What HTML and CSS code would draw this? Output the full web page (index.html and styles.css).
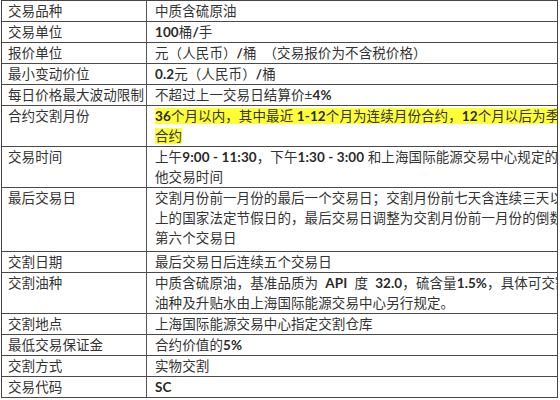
FILE: index.html
```html
<!DOCTYPE html>
<html lang="zh-CN">
<head>
<meta charset="utf-8">
<title>原油期货合约</title>
<link rel="stylesheet" href="styles.css">
</head>
<body>
<div class="sheet">
  <div class="row"><div class="k">交易品种</div><div class="v">中质含硫原油</div></div>
  <div class="row"><div class="k">交易单位</div><div class="v"><b>100</b>桶<b>/</b>手</div></div>
  <div class="row"><div class="k">报价单位</div><div class="v">元（人民币）<b>/</b>桶　（交易报价为不含税价格）</div></div>
  <div class="row"><div class="k">最小变动价位</div><div class="v"><b>0.2</b>元（人民币）<b>/</b>桶</div></div>
  <div class="row"><div class="k">每日价格最大波动限制</div><div class="v">不超过上一交易日结算价±<b>4%</b></div></div>
  <div class="row"><div class="k">合约交割月份</div><div class="v"><span class="hl"><b>36</b>个月以内，其中最近 <b>1-12</b>个月为连续月份合约，<b>12</b>个月以后为季度月份</span><br><span class="hl">合约</span></div></div>
  <div class="row"><div class="k">交易时间</div><div class="v">上午<b>9:00 - 11:30</b>，下午<b>1:30 - 3:00</b>&nbsp;和上海国际能源交易中心规定的其<br>他交易时间</div></div>
  <div class="row tall"><div class="k">最后交易日</div><div class="v">交割月份前一月份的最后一个交易日；交割月份前七天含连续三天以<br>上的国家法定节假日的，最后交易日调整为交割月份前一月份的倒数<br>第六个交易日</div></div>
  <div class="row"><div class="k">交割日期</div><div class="v">最后交易日后连续五个交易日</div></div>
  <div class="row"><div class="k">交割油种</div><div class="v">中质含硫原油，基准品质为&nbsp;&nbsp;<b>API</b>&nbsp;&nbsp;度&nbsp;&nbsp;<b>32.0</b>，硫含量<b>1.5%</b>，具体可交割<br>油种及升贴水由上海国际能源交易中心另行规定。</div></div>
  <div class="row"><div class="k">交割地点</div><div class="v">上海国际能源交易中心指定交割仓库</div></div>
  <div class="row"><div class="k">最低交易保证金</div><div class="v">合约价值的<b>5%</b></div></div>
  <div class="row"><div class="k">交割方式</div><div class="v">实物交割</div></div>
  <div class="row"><div class="k">交易代码</div><div class="v"><b>SC</b></div></div>
</div>
</body>
</html>
```

FILE: styles.css
```css
html, body {
  margin: 0;
  padding: 0;
  background: #ffffff;
}

body {
  font-family: "Lato", "Noto Sans CJK SC", sans-serif;
  font-size: 13.5px;
  color: #333333;
  letter-spacing: 0.1px;
}

.sheet {
  width: 555px;
  margin-left: 1px;
  border-top: 1px solid #444444;
  border-left: 1px solid #444444;
  border-right: 1px solid #444444;
}

.row {
  display: grid;
  grid-template-columns: 145px 1fr;
  border-bottom: 1px solid #4a4a4a;
  line-height: 20px;
}

.row.tall .v,
.row.tall .k {
  padding-bottom: 3px;
}

.k {
  padding-left: 6px;
  border-right: 1px solid #555555;
  white-space: nowrap;
  overflow: hidden;
}

.v {
  padding-left: 8px;
  white-space: nowrap;
  overflow: hidden;
}

.v b {
  font-weight: 700;
  color: #2a2a2a;
}

.hl {
  background: #ffff38;
}
```
